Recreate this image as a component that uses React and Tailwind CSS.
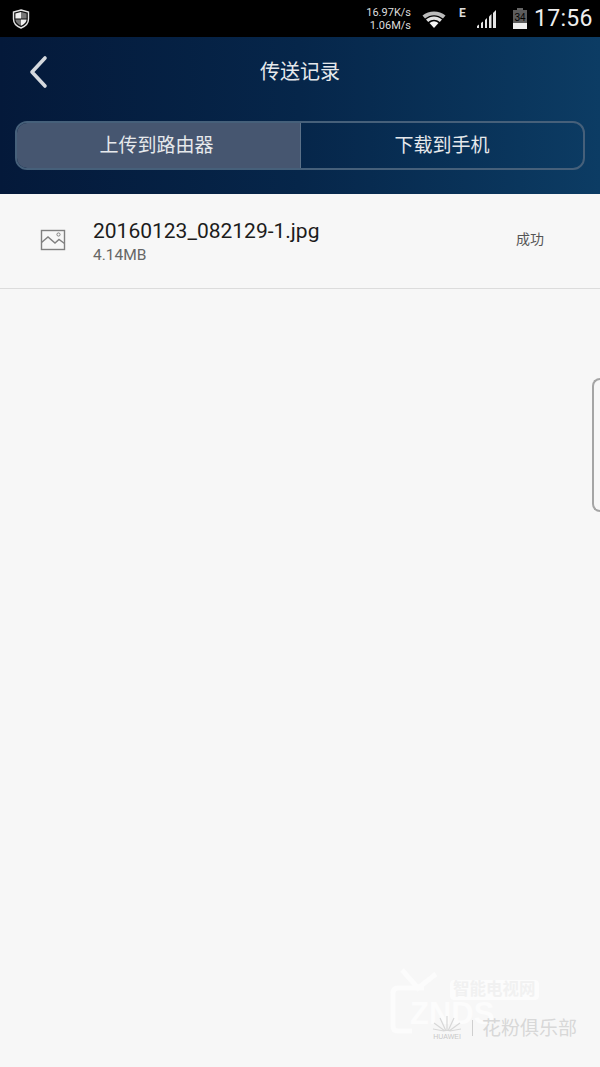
import React from 'react';

const cjk = "font-['Roboto','Noto_Sans_CJK_SC',sans-serif]";

const ShieldIcon = () => (
  <svg width="18" height="20" viewBox="0 0 18 20">
    <path d="M9 1 L16.5 3 V10 C16.5 14.5 13 17.5 9 19 C5 17.5 1.5 14.5 1.5 10 V3 Z" fill="#111" stroke="#e5e5e5" strokeWidth="1.4" />
    <path d="M9 3 L3.4 4.4 V9.5 H9 Z" fill="#f0f0f0" />
    <path d="M9 3 L14.6 4.4 V9.5 H9 Z" fill="#777" />
    <path d="M3.4 10.5 H9 V16.8 C6.4 15.6 3.6 13.6 3.4 10.5 Z" fill="#777" />
    <path d="M14.6 10.5 H9 V16.8 C11.6 15.6 14.4 13.6 14.6 10.5 Z" fill="#f0f0f0" />
  </svg>
);

const WifiIcon = () => (
  <svg width="24" height="18" viewBox="0 0 24 18">
    <path d="M0.5 5.5 C7 0 17 0 23.5 5.5 L21 8.5 C15.5 4 8.5 4 3 8.5 Z" fill="#bbb" />
    <path d="M4 9.5 C9 5.5 15 5.5 20 9.5 L17.8 12 C14 9 10 9 6.2 12 Z" fill="#e2e2e2" />
    <path d="M7.5 13 C10.5 10.8 13.5 10.8 16.5 13 L12 18 Z" fill="#f5f5f5" />
  </svg>
);

const SignalIcon = () => (
  <svg width="20" height="20" viewBox="0 0 20 20" fill="#e5e5e5">
    <path d="M0 17 L2 15.5 V19 H0 Z" />
    <path d="M4 14 L6 12.5 V19 H4 Z" />
    <path d="M8 11 L10 9 V19 H8 Z" />
    <path d="M12 7.5 L14.5 5 V19 H12 Z" />
    <path d="M16 4 L19 1 V19 H16 Z" />
  </svg>
);

const BatteryIcon = () => (
  <div className="flex flex-col items-center w-[14px]">
    <div className="w-[6px] h-[2px] bg-[#666]" />
    <div className="w-[14px] h-[19px] bg-[#5c5c5c] flex flex-col justify-end relative">
      <div className="h-[6px] bg-[#eee]" />
      <span className="absolute inset-x-0 top-[3px] text-center text-[10px] leading-[10px] text-black font-['Liberation_Sans',sans-serif]">34</span>
    </div>
  </div>
);

const ImageIcon = () => (
  <svg width="26" height="22" viewBox="0 0 26 22" fill="none" stroke="#808080" strokeWidth="1.4">
    <rect x="1.5" y="1.5" width="23" height="19" />
    <path d="M1.5 13.5 L8 8 L15 14 L19 10.5 L24.5 14.5" />
    <circle cx="18.5" cy="5.5" r="1.6" strokeWidth="1" />
  </svg>
);

export default function App() {
  return (
    <div className={`relative w-[600px] h-[1067px] overflow-hidden flex flex-col bg-[#f7f7f7] ${cjk}`}>
      {/* Status bar */}
      <div className="h-[37px] bg-black flex items-center justify-between pl-[12px] pr-[9px] shrink-0">
        <ShieldIcon />
        <div className="flex items-center">
          <div className="text-right text-[11px] leading-[13px] text-[#ddd] w-[60px] mr-[11px]">
            <div>16.97K/s</div>
            <div>1.06M/s</div>
          </div>
          <WifiIcon />
          <span className="text-[12px] leading-none font-bold text-[#ddd] ml-[13px] mb-[12px] w-[12px]">E</span>
          <div className="ml-[6px]"><SignalIcon /></div>
          <div className="ml-[16px]"><BatteryIcon /></div>
          <span className="ml-[7px] w-[57px] text-right text-[23px] leading-none text-[#eee] tracking-[0.3px]">17:56</span>
        </div>
      </div>

      {/* Header */}
      <div className="h-[157px] shrink-0 bg-gradient-to-r from-[#04193a] via-[#06264a] to-[#0c3c64] px-[15px] flex flex-col">
        <div className="relative h-[85px] shrink-0 flex items-center justify-center pb-[16px]">
          <svg className="absolute left-[12px] top-[16px]" width="24" height="36" viewBox="0 0 24 36" fill="none" stroke="#d5d9de" strokeWidth="3.6" strokeLinecap="round" strokeLinejoin="round">
            <path d="M18 5 L5 19 L18 33" />
          </svg>
          <span className="text-[20px] leading-none text-[#e6e9ec]">传送记录</span>
        </div>
        <div className="h-[49px] -mt-[1px] flex rounded-[12px] border-2 border-[#46607a] overflow-hidden">
          <div className="w-[284px] bg-[#465670] flex items-center justify-center pt-[2px] pr-[4px] text-[19px] text-[#e6e9ec] border-r border-[#5c7188]">上传到路由器</div>
          <div className="flex-1 flex items-center justify-center pt-[2px] text-[19px] text-[#e6e9ec]">下载到手机</div>
        </div>
      </div>

      {/* Transfer record */}
      <div className="h-[95px] shrink-0 flex items-center border-b border-[#dcdcdc] pl-[40px] pr-[56px] pb-[3px]">
        <ImageIcon />
        <div className="ml-[27px] flex-1 mt-[5px]">
          <div className="text-[21px] leading-[25px] text-[#1c1c1c]">20160123_082129-1.jpg</div>
          <div className="text-[15.5px] leading-[22px] text-[#666]">4.14MB</div>
        </div>
        <span className="text-[14px] text-[#555]">成功</span>
      </div>

      {/* Side handle */}
      <div className="absolute right-0 top-[378px] w-[8px] h-[134px] rounded-l-[10px] border-2 border-r-0 border-[#a5a5a5]" />

      {/* Watermark */}
      <svg className="absolute left-[388px] top-[966px]" width="70" height="70" viewBox="0 0 70 70" fill="none" stroke="#fcfcfc" strokeWidth="5">
        <path d="M14 4 L30 22 L48 8" />
        <path d="M36 22 H10 Q5 22 5 27 V60 Q5 65 10 65 H24" />
      </svg>
      <div className="absolute left-[450px] top-[980px] bg-[#fcfcfc] rounded-[4px] px-[3px] text-[16.5px] leading-[20px] font-bold text-[#f1f1f1]">智能电视网</div>
      <div className="absolute left-[410px] top-[998px] text-[31px] leading-none font-bold text-[#fcfcfc] font-['Liberation_Sans',sans-serif]">ZNDS</div>
      <div className="absolute left-[431px] top-[1015px] flex items-center">
        <div className="flex flex-col items-center w-[32px]">
          <svg width="30" height="18" viewBox="0 0 30 18" fill="none" stroke="#d8d8d8" strokeWidth="1.2">
            <path d="M15 16 V1 M14 16 L8 3 M16 16 L22 3 M13 16 L2 8 M17 16 L28 8 M12 16 L1 14 M18 16 L29 14" />
          </svg>
          <span className="text-[7px] leading-[8px] text-[#c8c8c8] font-['Liberation_Sans',sans-serif]">HUAWEI</span>
        </div>
        <div className="w-px h-[16px] bg-[#cfcfcf] ml-[9px]" />
        <span className="ml-[9px] text-[19px] leading-none text-[#d8d8d8]">花粉俱乐部</span>
      </div>
    </div>
  );
}
